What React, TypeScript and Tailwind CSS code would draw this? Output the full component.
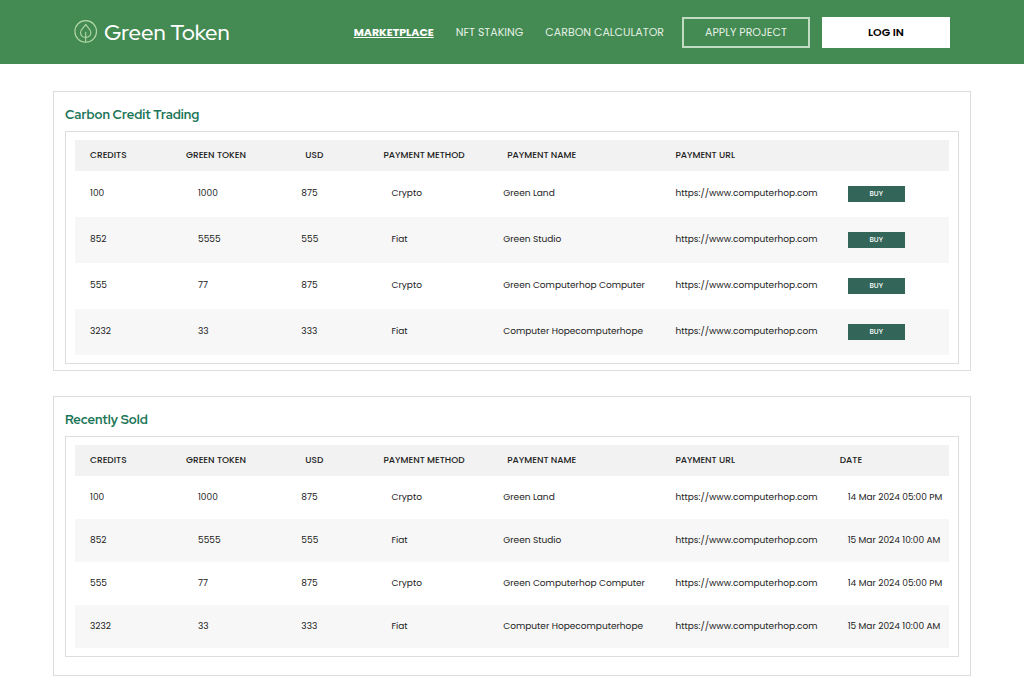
import type { ReactNode } from 'react';
import clsx from 'clsx';

interface Trade {
    credits: string;
    token: string;
    usd: string;
    method: string;
    name: string;
    url: string;
    date: string;
}

const trades: Trade[] = [
    { credits: '100', token: '1000', usd: '875', method: 'Crypto', name: 'Green Land', url: 'https://www.computerhop.com', date: '14 Mar 2024 05:00 PM' },
    { credits: '852', token: '5555', usd: '555', method: 'Fiat', name: 'Green Studio', url: 'https://www.computerhop.com', date: '15 Mar 2024 10:00 AM' },
    { credits: '555', token: '77', usd: '875', method: 'Crypto', name: 'Green Computerhop Computer', url: 'https://www.computerhop.com', date: '14 Mar 2024 05:00 PM' },
    { credits: '3232', token: '33', usd: '333', method: 'Fiat', name: 'Computer Hopecomputerhope', url: 'https://www.computerhop.com', date: '15 Mar 2024 10:00 AM' },
];

const columns = [
    { label: 'CREDITS', width: 'w-[12.7%]', head: 'pl-[15px]' },
    { label: 'GREEN TOKEN', width: 'w-[13.2%]', head: '' },
    { label: 'USD', width: 'w-[9.4%]', head: 'pl-1' },
    { label: 'PAYMENT METHOD', width: 'w-[13.7%]', head: '' },
    { label: 'PAYMENT NAME', width: 'w-[19.7%]', head: 'pl-1' },
    { label: 'PAYMENT URL', width: 'w-[18.8%]', head: '' },
];

function Logo() {
    return (
        <a href="#" className="flex items-center gap-1.5 font-['Red_Hat_Display','Poppins','Inter',sans-serif] text-[22px] font-medium text-white">
            <svg width="24" height="24" viewBox="0 0 24 24" fill="none" stroke="#b4d9a4" strokeWidth="1.1" strokeLinecap="round" strokeLinejoin="round" aria-hidden="true">
                <circle cx="11.7" cy="11.4" r="10.8" />
                <path d="M11.7 17.4C8.8 17.4 6.5 15.4 6.5 12.6C6.5 9.4 9.6 7.8 11.7 4.4C13.8 7.8 16.9 9.4 16.9 12.6C16.9 15.4 14.6 17.4 11.7 17.4Z" />
                <path d="M11.7 12.4V22.2" />
            </svg>
            Green Token
        </a>
    );
}

function Header() {
    return (
        <header className="flex h-16 items-center justify-between bg-[#448a53] px-[74px]">
            <Logo />
            <nav className="flex items-center text-[11px] whitespace-nowrap text-[#e3f0e4]">
                <a href="#" className="mr-[22px] font-bold text-white underline">MARKETPLACE</a>
                <a href="#" className="mr-[22px]">NFT STAKING</a>
                <a href="#" className="mr-[18px]">CARBON CALCULATOR</a>
                <button className="mr-3 h-[31px] w-32 border-2 border-[#c0dcc2]">APPLY PROJECT</button>
                <button className="h-[31px] w-32 bg-white font-semibold text-black">LOG IN</button>
            </nav>
        </header>
    );
}

interface TradeTableProps {
    lastLabel: string;
    rowClass: string;
    renderLast: (trade: Trade) => ReactNode;
}

function TradeTable({ lastLabel, rowClass, renderLast }: TradeTableProps) {
    return (
        <table className="w-full table-fixed text-left text-[9px] whitespace-nowrap text-[#222222]">
            <thead>
                <tr className="h-[31px] bg-[#f2f2f2]">
                    {columns.map((col) => (
                        <th key={col.label} className={clsx('font-medium', col.width, col.head)}>{col.label}</th>
                    ))}
                    <th className="font-medium">{lastLabel}</th>
                </tr>
            </thead>
            <tbody>
                {trades.map((trade) => (
                    <tr key={trade.credits} className={clsx('even:bg-[#f7f7f7]', rowClass)}>
                        <td className="pl-[15px]">{trade.credits}</td>
                        <td className="pl-3">{trade.token}</td>
                        <td>{trade.usd}</td>
                        <td className="pl-2">{trade.method}</td>
                        <td>{trade.name}</td>
                        <td>
                            <a href={trade.url}>{trade.url}</a>
                        </td>
                        <td className="pl-2">{renderLast(trade)}</td>
                    </tr>
                ))}
            </tbody>
        </table>
    );
}

function Panel({ title, className, children }: { title: string; className: string; children: ReactNode }) {
    return (
        <section className={clsx('border border-[#dddddd] px-[11px]', className)}>
            <h2 className="pt-[13px] pb-1.5 font-['Red_Hat_Display','Poppins','Inter',sans-serif] text-[13px] leading-5 font-bold text-[#1b7658]">{title}</h2>
            <div className="border border-[#dddddd] px-[9px] py-2">{children}</div>
        </section>
    );
}

export default function App() {
    return (
        <div className="min-h-screen bg-white font-['Poppins','Inter',sans-serif]">
            <Header />
            <main className="flex flex-col gap-[25px] px-[53px] pt-[27px] pb-5">
                <Panel title="Carbon Credit Trading" className="pb-1.5">
                    <TradeTable
                        lastLabel=""
                        rowClass="h-[46px]"
                        renderLast={() => (
                            <button className="block h-4 w-[57px] bg-[#336659] text-[7px] font-medium text-white">BUY</button>
                        )}
                    />
                </Panel>
                <Panel title="Recently Sold" className="pb-[18px]">
                    <TradeTable lastLabel="DATE" rowClass="h-[43px]" renderLast={(trade) => trade.date} />
                </Panel>
            </main>
        </div>
    );
}
